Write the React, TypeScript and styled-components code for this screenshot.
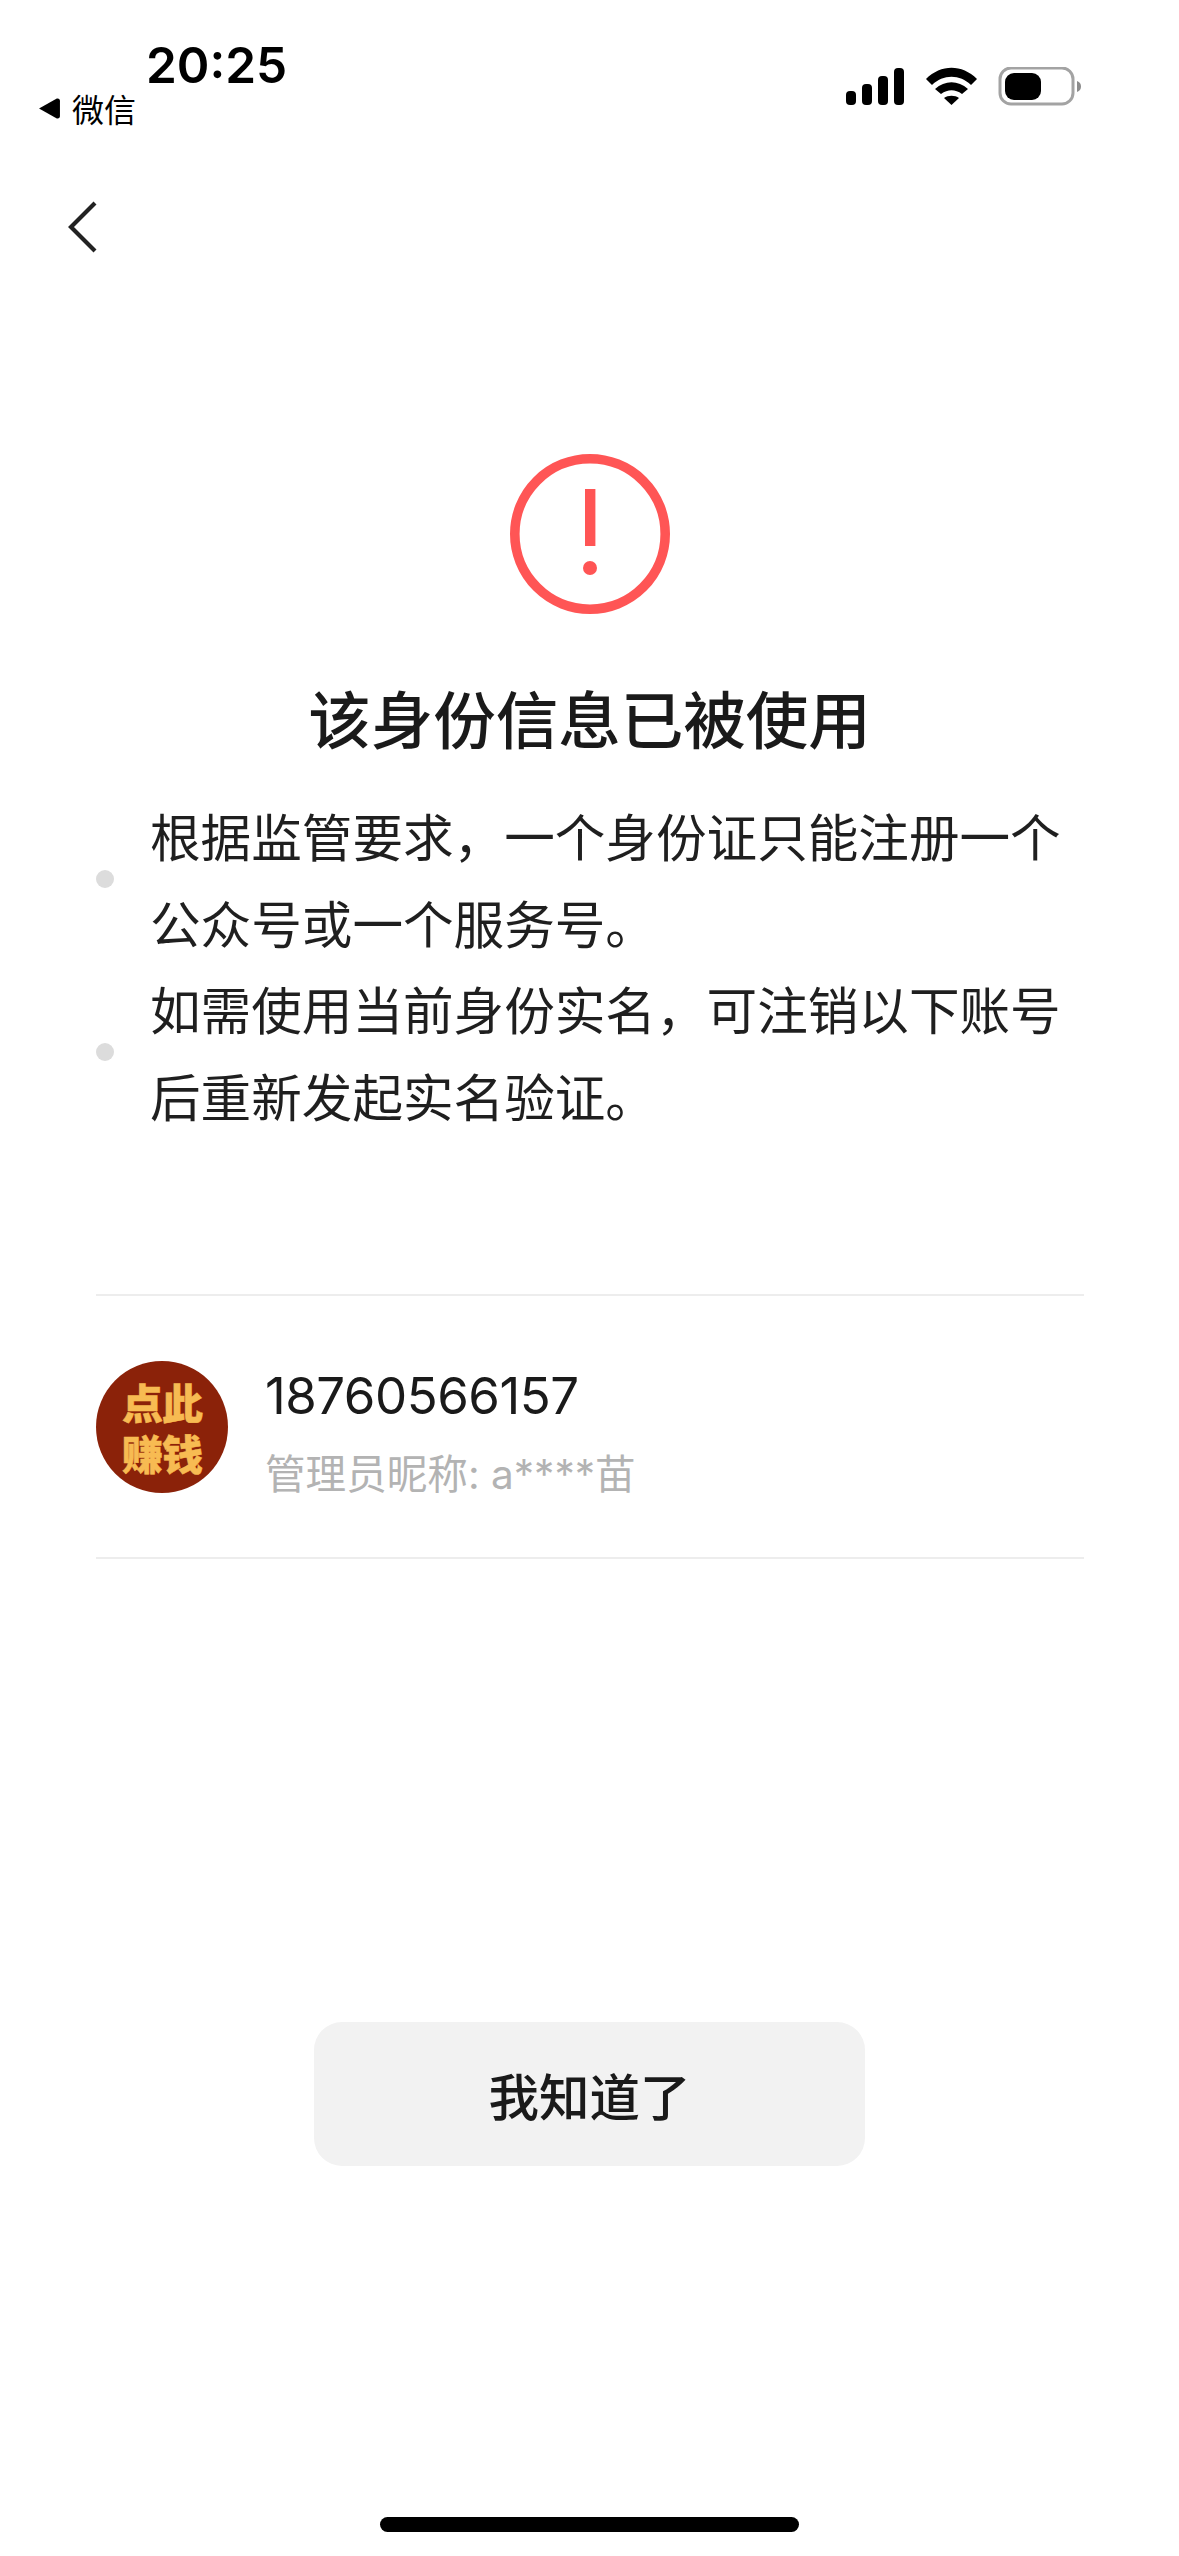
import React from "react";
import styled, { createGlobalStyle } from "styled-components";

const Global = createGlobalStyle`
  html, body { margin: 0; padding: 0; background: #fff; }
  * { box-sizing: border-box; }
`;

const CJK = `"Noto Sans CJK SC", "Noto Sans", sans-serif`;

const Page = styled.div`
  width: 1179px;
  height: 2556px;
  background: #fff;
  display: flex;
  flex-direction: column;
  overflow: hidden;
  font-family: ${CJK};
  color: #1a1a1a;
`;

const StatusBar = styled.header`
  height: 130px;
  display: flex;
  justify-content: space-between;
  padding: 38px 98px 0 38px;
`;

const StatusLeft = styled.div`
  display: flex;
  flex-direction: column;
`;

const Time = styled.div`
  font-family: "Inter", "Liberation Sans", sans-serif;
  font-size: 49.5px;
  font-weight: 600;
  line-height: 54px;
  height: 52px;
  margin-left: 108px;
  color: #000;
`;

const Carrier = styled.div`
  display: flex;
  align-items: center;
  gap: 11px;
  font-size: 32px;
  line-height: 36px;
  color: #000;
`;

const StatusRight = styled.div`
  padding-top: 29px;
`;

const NavBar = styled.nav`
  height: 146px;
  padding: 70px 0 0 67px;
`;

const Hero = styled.section`
  display: flex;
  flex-direction: column;
  align-items: center;
  padding-top: 178px;
`;

const Title = styled.h1`
  margin: 63px 0 0;
  font-size: 62.5px;
  font-weight: 500;
  line-height: 80px;
  color: #1a1a1a;
`;

const NoticeList = styled.ul`
  list-style: none;
  margin: 0;
  padding: 35px 96px 0;
`;

const Notice = styled.li`
  display: flex;
  align-items: center;
  gap: 36px;
`;

const Dot = styled.span`
  flex: none;
  width: 18px;
  height: 18px;
  border-radius: 50%;
  background: #dcdcdc;
`;

const NoticeText = styled.p`
  margin: 0;
  font-size: 50.6px;
  line-height: 86.5px;
  color: #1f1f1f;
`;

const Account = styled.section`
  margin: 156px 95px 0 96px;
  height: 265px;
  border-top: 2px solid #ededed;
  border-bottom: 2px solid #ededed;
  display: flex;
  align-items: center;
  gap: 37px;
`;

const Avatar = styled.div`
  flex: none;
  width: 132px;
  height: 132px;
  border-radius: 50%;
  background: #8b2209;
  display: flex;
  flex-direction: column;
  align-items: center;
  justify-content: center;
  font-size: 41px;
  font-weight: 900;
  line-height: 51px;
  letter-spacing: -1px;
  color: #f7bb52;
  -webkit-text-stroke: 0.5px #f7bb52;
`;

const AccountInfo = styled.div`
  display: flex;
  flex-direction: column;
  padding-top: 13px;
`;

const AccountName = styled.div`
  font-family: "Inter", "Liberation Sans", ${CJK};
  font-size: 51px;
  line-height: 66px;
  letter-spacing: -0.5px;
  color: #1a1a1a;
`;

const AccountMeta = styled.div`
  font-family: "Inter", "Liberation Sans", ${CJK};
  font-size: 40.6px;
  line-height: 56px;
  margin-top: 18px;
  color: #b3b3b3;
`;

const Footer = styled.div`
  flex: 1;
  display: flex;
  flex-direction: column;
  align-items: center;
  padding-top: 463px;
`;

const Action = styled.button`
  width: 551px;
  height: 144px;
  border: 0;
  border-radius: 28px;
  background: #f2f2f2;
  font-family: ${CJK};
  font-size: 50.5px;
  font-weight: 500;
  color: #1a1a1a;
`;

const HomeIndicator = styled.div`
  margin-top: auto;
  margin-bottom: 24px;
  width: 419px;
  height: 15px;
  border-radius: 8px;
  background: #000;
`;

const StatusIcons = () => (
  <svg width="236" height="40" viewBox="845 68 236 40" fill="none">
    <rect x="846" y="92" width="10" height="14" rx="4" fill="#000" />
    <rect x="862" y="85" width="10" height="21" rx="4" fill="#000" />
    <rect x="878" y="77" width="10" height="29" rx="4" fill="#000" />
    <rect x="894" y="69" width="10" height="37" rx="4" fill="#000" />
    <path d="M926 80 C941 65 962 65 977 80 L971 86 C960 75 943 75 932 86 Z" fill="#000" />
    <path d="M935 90 C945 81 958 81 968 90 L962 95 C955 90 948 90 941 95 Z" fill="#000" />
    <path d="M944 99 C948 96 955 96 959 99 L951.5 106 Z" fill="#000" />
    <rect x="1000" y="69" width="73" height="36" rx="11" stroke="#a3a3a3" strokeWidth="3" />
    <rect x="1005" y="74" width="36" height="27" rx="9" fill="#000" />
    <path d="M1077 82 C1080 83 1081 85 1081 87.5 C1081 90 1080 92 1077 93 Z" fill="#8c8c8c" />
  </svg>
);

export default function App() {
  return (
    <Page>
      <Global />
      <StatusBar>
        <StatusLeft>
          <Time>20:25</Time>
          <Carrier>
            <svg width="23" height="23" viewBox="0 0 22 22">
              <path d="M1 11 L18 1.5 Q21 1 21 4 L21 18 Q21 21 18 20.5 Z" fill="#000" />
            </svg>
            微信
          </Carrier>
        </StatusLeft>
        <StatusRight>
          <StatusIcons />
        </StatusRight>
      </StatusBar>
      <NavBar>
        <svg width="32" height="54" viewBox="0 0 32 54" fill="none">
          <path d="M28 3 L4 27 L28 51" stroke="#222" strokeWidth="4.2" />
        </svg>
      </NavBar>
      <Hero>
        <svg width="160" height="160" viewBox="0 0 160 160" fill="none">
          <circle cx="80" cy="80" r="75.2" stroke="#ff5555" strokeWidth="9.6" />
          <rect x="75" y="35" width="10.4" height="57" fill="#ff5555" />
          <circle cx="80" cy="114" r="7" fill="#ff5555" />
        </svg>
        <Title>该身份信息已被使用</Title>
      </Hero>
      <NoticeList>
        <Notice>
          <Dot />
          <NoticeText>根据监管要求，一个身份证只能注册一个公众号或一个服务号。</NoticeText>
        </Notice>
        <Notice>
          <Dot />
          <NoticeText>如需使用当前身份实名，可注销以下账号后重新发起实名验证。</NoticeText>
        </Notice>
      </NoticeList>
      <Account>
        <Avatar>
          <span>点此</span>
          <span>赚钱</span>
        </Avatar>
        <AccountInfo>
          <AccountName>18760566157</AccountName>
          <AccountMeta>管理员昵称: a****苗</AccountMeta>
        </AccountInfo>
      </Account>
      <Footer>
        <Action>我知道了</Action>
        <HomeIndicator />
      </Footer>
    </Page>
  );
}
